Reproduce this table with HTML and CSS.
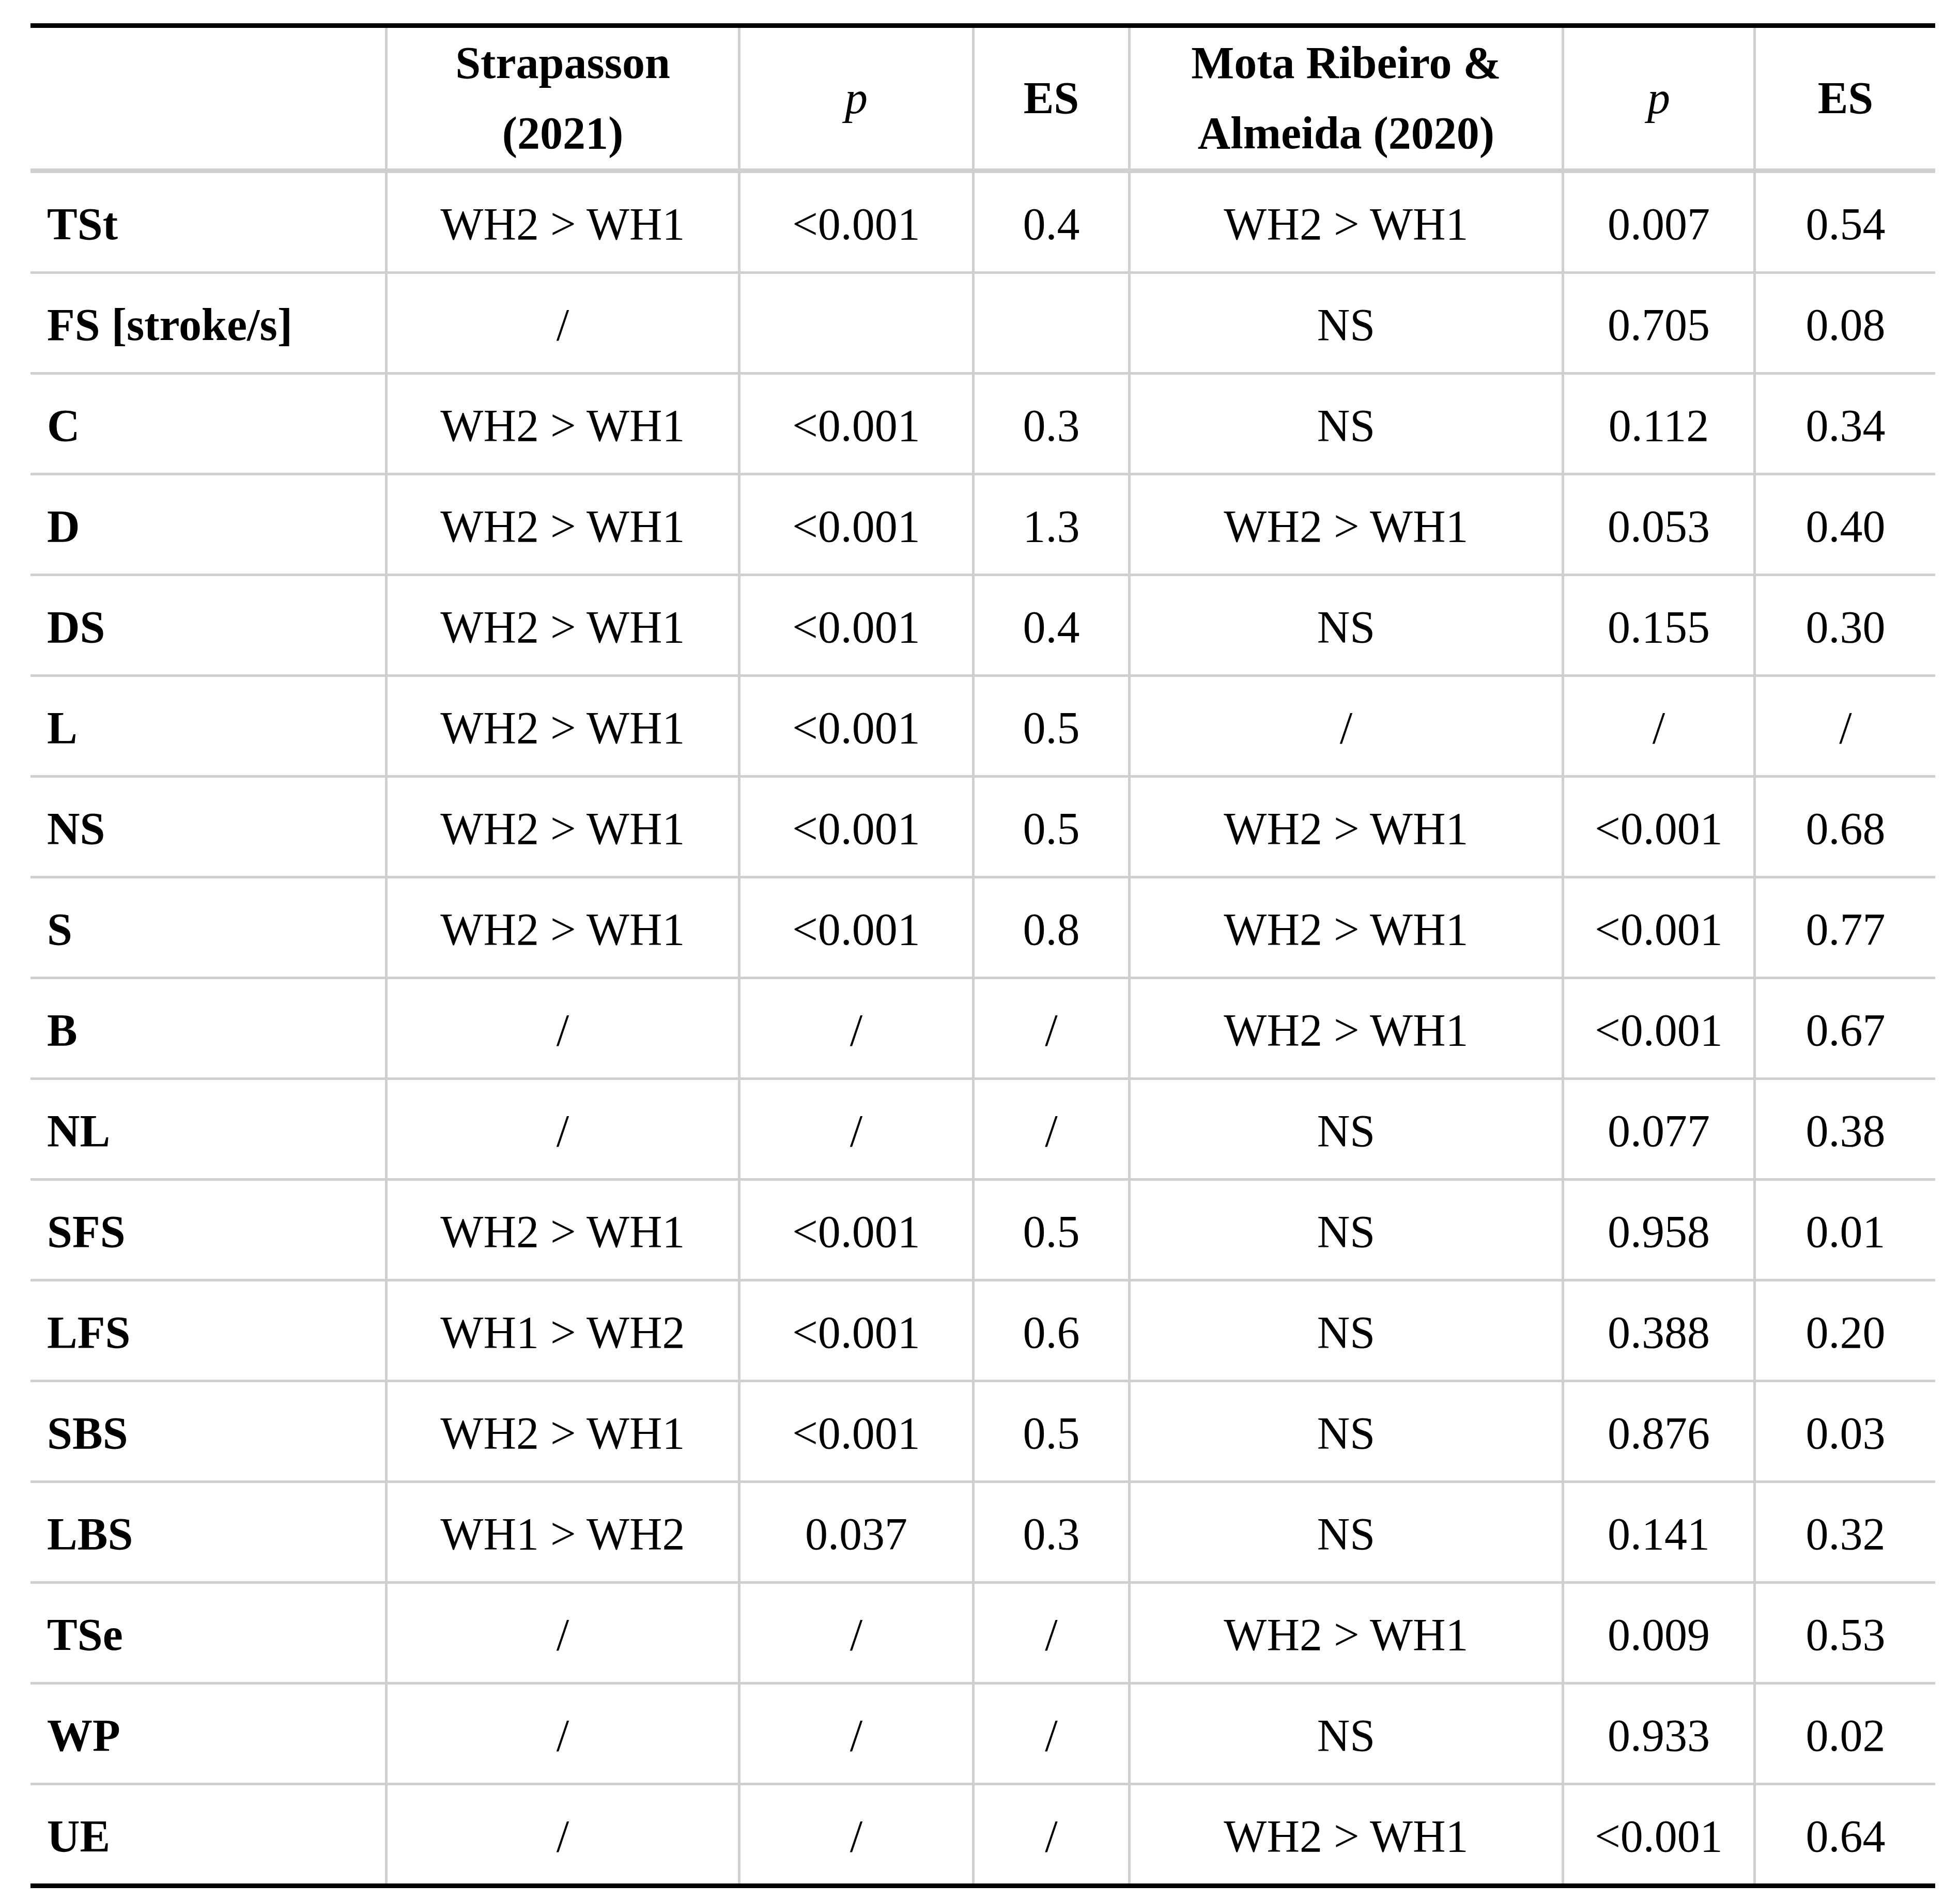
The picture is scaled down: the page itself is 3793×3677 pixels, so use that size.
FILE: index.html
```html
<!DOCTYPE html>
<html lang="en">
<head>
<meta charset="utf-8">
<title>Comparison table</title>
<link rel="stylesheet" href="styles.css">
</head>
<body>
<table class="results">
  <colgroup>
    <col class="c-label">
    <col class="c-str">
    <col class="c-p1">
    <col class="c-es1">
    <col class="c-mota">
    <col class="c-p2">
    <col class="c-es2">
  </colgroup>
  <thead>
    <tr>
      <th class="label"></th>
      <th>Strapasson<br>(2021)</th>
      <th class="pval">p</th>
      <th>ES</th>
      <th>Mota Ribeiro &amp;<br>Almeida (2020)</th>
      <th class="pval">p</th>
      <th>ES</th>
    </tr>
  </thead>
  <tbody>
    <tr><td class="label">TSt</td><td>WH2 &gt; WH1</td><td>&lt;0.001</td><td>0.4</td><td>WH2 &gt; WH1</td><td>0.007</td><td>0.54</td></tr>
    <tr><td class="label">FS [stroke/s]</td><td>/</td><td></td><td></td><td>NS</td><td>0.705</td><td>0.08</td></tr>
    <tr><td class="label">C</td><td>WH2 &gt; WH1</td><td>&lt;0.001</td><td>0.3</td><td>NS</td><td>0.112</td><td>0.34</td></tr>
    <tr><td class="label">D</td><td>WH2 &gt; WH1</td><td>&lt;0.001</td><td>1.3</td><td>WH2 &gt; WH1</td><td>0.053</td><td>0.40</td></tr>
    <tr><td class="label">DS</td><td>WH2 &gt; WH1</td><td>&lt;0.001</td><td>0.4</td><td>NS</td><td>0.155</td><td>0.30</td></tr>
    <tr><td class="label">L</td><td>WH2 &gt; WH1</td><td>&lt;0.001</td><td>0.5</td><td>/</td><td>/</td><td>/</td></tr>
    <tr><td class="label">NS</td><td>WH2 &gt; WH1</td><td>&lt;0.001</td><td>0.5</td><td>WH2 &gt; WH1</td><td>&lt;0.001</td><td>0.68</td></tr>
    <tr><td class="label">S</td><td>WH2 &gt; WH1</td><td>&lt;0.001</td><td>0.8</td><td>WH2 &gt; WH1</td><td>&lt;0.001</td><td>0.77</td></tr>
    <tr><td class="label">B</td><td>/</td><td>/</td><td>/</td><td>WH2 &gt; WH1</td><td>&lt;0.001</td><td>0.67</td></tr>
    <tr><td class="label">NL</td><td>/</td><td>/</td><td>/</td><td>NS</td><td>0.077</td><td>0.38</td></tr>
    <tr><td class="label">SFS</td><td>WH2 &gt; WH1</td><td>&lt;0.001</td><td>0.5</td><td>NS</td><td>0.958</td><td>0.01</td></tr>
    <tr><td class="label">LFS</td><td>WH1 &gt; WH2</td><td>&lt;0.001</td><td>0.6</td><td>NS</td><td>0.388</td><td>0.20</td></tr>
    <tr><td class="label">SBS</td><td>WH2 &gt; WH1</td><td>&lt;0.001</td><td>0.5</td><td>NS</td><td>0.876</td><td>0.03</td></tr>
    <tr><td class="label">LBS</td><td>WH1 &gt; WH2</td><td>0.037</td><td>0.3</td><td>NS</td><td>0.141</td><td>0.32</td></tr>
    <tr><td class="label">TSe</td><td>/</td><td>/</td><td>/</td><td>WH2 &gt; WH1</td><td>0.009</td><td>0.53</td></tr>
    <tr><td class="label">WP</td><td>/</td><td>/</td><td>/</td><td>NS</td><td>0.933</td><td>0.02</td></tr>
    <tr><td class="label">UE</td><td>/</td><td>/</td><td>/</td><td>WH2 &gt; WH1</td><td>&lt;0.001</td><td>0.64</td></tr>
  </tbody>
</table>
</body>
</html>
```

FILE: styles.css
```css
html, body {
  margin: 0;
  background: #ffffff;
}

body {
  padding: 45px 0 0 59px;
  font-family: "Liberation Serif", "Times New Roman", serif;
  font-size: 88px;
  color: #000000;
}

.results {
  border-collapse: separate;
  border-spacing: 0;
  table-layout: fixed;
  width: 3686px;
  border-top: 9px solid #000000;
  border-bottom: 9px solid #000000;
}

.c-label { width: 691px; }
.c-str   { width: 683px; }
.c-p1    { width: 453px; }
.c-es1   { width: 302px; }
.c-mota  { width: 839px; }
.c-p2    { width: 371px; }
.c-es2   { width: 347px; }

.results th,
.results td {
  box-sizing: border-box;
  padding: 0 32px;
  text-align: center;
  vertical-align: middle;
  border-right: 5px solid #d0cfcd;
  border-bottom: 5px solid #d0cfcd;
  white-space: nowrap;
}

.results th:last-child,
.results td:last-child {
  border-right: none;
}

.results thead th {
  height: 280px;
  line-height: 136px;
  font-weight: bold;
  border-bottom-width: 9px;
}

.results tbody td {
  height: 195px;
  padding-top: 8px;
  line-height: 100px;
  font-weight: normal;
}

.results tbody tr:last-child td {
  height: 190px;
  border-bottom: none;
}

.results .label {
  text-align: left;
  font-weight: bold;
}

.results th.pval {
  font-style: italic;
  font-weight: normal;
}
```
